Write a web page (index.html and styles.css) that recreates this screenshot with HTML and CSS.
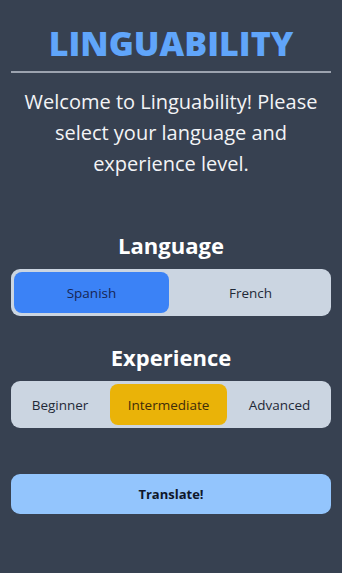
FILE: index.html
```html
<!DOCTYPE html>
<html lang="en">
<head>
<meta charset="utf-8">
<title>Linguability</title>
<link rel="stylesheet" href="styles.css">
</head>
<body>
<main class="app">
  <h1 class="title">LINGUABILITY</h1>
  <hr class="rule">
  <p class="intro">Welcome to Linguability! Please select your language and experience level.</p>

  <h2 class="section-title section-title--first">Language</h2>
  <div class="segmented segmented--even">
    <button class="seg-btn seg-btn--blue">Spanish</button>
    <button class="seg-btn">French</button>
  </div>

  <h2 class="section-title">Experience</h2>
  <div class="segmented">
    <button class="seg-btn">Beginner</button>
    <button class="seg-btn seg-btn--yellow">Intermediate</button>
    <button class="seg-btn">Advanced</button>
  </div>

  <button class="translate">Translate!</button>
</main>
</body>
</html>
```

FILE: styles.css
```css
html, body {
  margin: 0;
  padding: 0;
  background: #374151;
  height: 100%;
}

body {
  font-family: "Open Sans", "Noto Sans", sans-serif;
  color: #f3f4f6;
}

.app {
  padding: 23px 11px 0;
  display: flex;
  flex-direction: column;
}

.title {
  margin: 0;
  text-align: center;
  font-size: 34px;
  line-height: 40px;
  font-weight: 800;
  color: #60a5fa;
}

.rule {
  margin: 8px 0 0;
  border: 0;
  height: 2px;
  background: #9ca3af;
}

.intro {
  margin: 13px 0 0;
  text-align: center;
  font-size: 20px;
  line-height: 31px;
  color: #f3f4f6;
  padding: 0 8px;
}

.section-title {
  margin: 25px 0 8px;
  text-align: center;
  font-size: 22px;
  line-height: 32px;
  font-weight: 700;
  color: #ffffff;
}

.section-title--first {
  margin-top: 50px;
}

.segmented {
  display: flex;
  gap: 4px;
  padding: 3px;
  background: #cbd5e1;
  border-radius: 9px;
}

.seg-btn {
  flex: 1 1 auto;
  height: 41px;
  border: 0;
  border-radius: 8px;
  background: transparent;
  font-family: inherit;
  font-size: 13.5px;
  color: #1f2937;
  padding: 0;
}

.segmented--even .seg-btn {
  flex: 1 1 0;
}

.seg-btn--blue {
  background: #3b82f6;
  color: #172554;
}

.seg-btn--yellow {
  background: #eab308;
  color: #3f2d0a;
}

.translate {
  margin-top: 46px;
  height: 40px;
  border: 0;
  border-radius: 9px;
  background: #93c5fd;
  font-family: inherit;
  font-size: 13px;
  font-weight: 700;
  color: #0f172a;
}
```
